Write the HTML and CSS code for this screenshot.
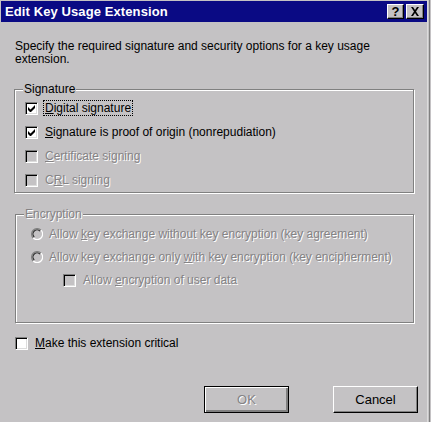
FILE: index.html
```html
<!DOCTYPE html>
<html>
<head>
<meta charset="utf-8">
<link rel="stylesheet" href="styles.css">
</head>
<body>
<div class="window">
  <div class="titlebar">
    <span class="title">Edit Key Usage Extension</span>
    <div class="tb-buttons">
      <span class="tb-btn help">?</span>
      <span class="tb-btn close">
        <svg width="10" height="9" viewBox="0 0 10 9"><path d="M1 0h2l2 3 2-3h2L6 4.5 9 9H7L5 6 3 9H1l3-4.5z" fill="#000"/></svg>
      </span>
    </div>
  </div>
  <div class="content">
    <p class="desc">Specify the required signature and security options for a key usage extension.</p>

    <div class="group sig">
      <span class="legend">Signature</span>
      <div class="row">
        <span class="cb"><svg width="7" height="7" viewBox="0 0 7 7"><path d="M0 2v3l2 2h1l4-4V0L2.5 4.5z" fill="#000"/></svg></span>
        <span class="label focus"><u>D</u>igital signature</span>
      </div>
      <div class="row">
        <span class="cb"><svg width="7" height="7" viewBox="0 0 7 7"><path d="M0 2v3l2 2h1l4-4V0L2.5 4.5z" fill="#000"/></svg></span>
        <span class="label"><u>S</u>ignature is proof of origin (nonrepudiation)</span>
      </div>
      <div class="row">
        <span class="cb disabled"></span>
        <span class="label dis"><u>C</u>ertificate signing</span>
      </div>
      <div class="row">
        <span class="cb disabled"></span>
        <span class="label dis">C<u>R</u>L signing</span>
      </div>
    </div>

    <div class="group enc">
      <span class="legend dis">Encryption</span>
      <div class="row radio-row">
        <span class="radio"><svg width="12" height="12" viewBox="0 0 12 12"><path d="M10 2.2A5.3 5.3 0 0 0 2.2 10" fill="none" stroke="#808080" stroke-width="1.2"/><path d="M9 3.2A4 4 0 0 0 3.2 9" fill="none" stroke="#202020" stroke-width="1.1"/><path d="M10 2.2A5.3 5.3 0 0 1 2.2 10" fill="none" stroke="#fff" stroke-width="1.2"/></svg></span>
        <span class="label dis">Allow <u>k</u>ey exchange without key encryption (key agreement)</span>
      </div>
      <div class="row radio-row">
        <span class="radio"><svg width="12" height="12" viewBox="0 0 12 12"><path d="M10 2.2A5.3 5.3 0 0 0 2.2 10" fill="none" stroke="#808080" stroke-width="1.2"/><path d="M9 3.2A4 4 0 0 0 3.2 9" fill="none" stroke="#202020" stroke-width="1.1"/><path d="M10 2.2A5.3 5.3 0 0 1 2.2 10" fill="none" stroke="#fff" stroke-width="1.2"/></svg></span>
        <span class="label dis">Allow key exchange only <u>w</u>ith key encryption (key encipherment)</span>
      </div>
      <div class="row sub-row">
        <span class="cb disabled"></span>
        <span class="label dis">Allow <u>e</u>ncryption of user data</span>
      </div>
    </div>

    <div class="row critical">
      <span class="cb"></span>
      <span class="label"><u>M</u>ake this extension critical</span>
    </div>

    <div class="buttons">
      <span class="btn default"><span class="btn-inner dis">OK</span></span>
      <span class="btn"><span class="btn-inner">Cancel</span></span>
    </div>
  </div>
</div>
</body>
</html>
```

FILE: styles.css
```css
html, body {
  margin: 0;
  padding: 0;
  background: #c4c2c4;
}
body {
  width: 431px;
  height: 422px;
  overflow: hidden;
  font-family: "Liberation Sans", Arial, sans-serif;
  font-size: 12px;
  color: #000;
}
.window {
  width: 430px;
  height: 430px;
  box-sizing: border-box;
  border-right: 1px solid #808080;
  box-shadow: inset -1px 0 0 #c4c2c4, inset -2px 0 0 #dcdcdc;
  padding: 1px 2px 0 1px;
}
.titlebar {
  height: 21px;
  background: #0a0a84;
  display: flex;
  align-items: center;
  justify-content: space-between;
  padding: 0 3px 0 4px;
}
.title {
  color: #fff;
  font-weight: bold;
  font-size: 13px;
  letter-spacing: 0.1px;
}
.tb-buttons {
  display: flex;
  gap: 2px;
}
.tb-btn {
  width: 17px;
  height: 15px;
  box-sizing: border-box;
  background: #c4c2c4;
  border-top: 1px solid #fff;
  border-left: 1px solid #fff;
  border-right: 1px solid #000;
  border-bottom: 1px solid #000;
  box-shadow: inset -1px -1px 0 #808080;
  display: flex;
  align-items: center;
  justify-content: center;
  font-weight: bold;
  font-size: 13px;
  line-height: 1;
}
.tb-btn.close { width: 18px; }
.content {
  padding: 0 0 0 13px;
}
.desc {
  margin: 18px 0 0 1px;
  width: 380px;
  line-height: 13px;
}
.group {
  position: relative;
  width: 400px;
  box-sizing: border-box;
  border: 1px solid #808080;
  box-shadow: inset 1px 1px 0 #fff, 1px 1px 0 #fff;
}
.sig {
  margin-top: 23px;
  height: 104px;
  padding: 6px 0 0 10px;
}
.enc {
  margin-top: 21px;
  margin-left: 1px;
  width: 399px;
  height: 109px;
  padding: 7px 0 0 15px;
}
.legend {
  position: absolute;
  top: -8px;
  left: 8px;
  padding: 0 1px;
  background: #c4c2c4;
  line-height: 14px;
}
.row {
  display: flex;
  align-items: center;
  height: 24px;
}
.radio-row { height: 23px; }
.sub-row { padding-left: 32px; }
.cb {
  width: 13px;
  height: 13px;
  box-sizing: border-box;
  background: #fff;
  border-top: 1px solid #808080;
  border-left: 1px solid #808080;
  border-right: 1px solid #fff;
  border-bottom: 1px solid #fff;
  box-shadow: inset 1px 1px 0 #000, inset -1px -1px 0 #dcdcdc;
  display: flex;
  align-items: center;
  justify-content: center;
  flex: none;
}
.cb.disabled { background: #c4c2c4; }
.radio {
  width: 12px;
  height: 12px;
  flex: none;
  display: flex;
}
.label {
  margin-left: 7px;
  line-height: 14px;
  white-space: nowrap;
}
.radio-row .label { margin-left: 6px; }
.focus {
  outline: 1px dotted #000;
  outline-offset: 0;
  padding: 0 1px;
  margin-left: 6px;
}
.dis {
  color: #858385;
  text-shadow: 1px 1px 0 #fff;
}
.critical {
  margin-top: 8px;
  margin-left: 1px;
  height: 24px;
}
.buttons {
  display: flex;
  justify-content: flex-end;
  gap: 44px;
  margin-top: 31px;
  padding-right: 9px;
}
.btn {
  width: 85px;
  height: 27px;
  box-sizing: border-box;
  border-top: 1px solid #fff;
  border-left: 1px solid #fff;
  border-right: 1px solid #000;
  border-bottom: 1px solid #000;
  box-shadow: inset -1px -1px 0 #808080;
  display: flex;
}
.btn.default {
  border: 1px solid #000;
  box-shadow: inset 1px 1px 0 #fff, inset -2px -2px 0 #808080;
}
.btn-inner {
  flex: 1;
  display: flex;
  align-items: center;
  justify-content: center;
  font-size: 13px;
}
```
